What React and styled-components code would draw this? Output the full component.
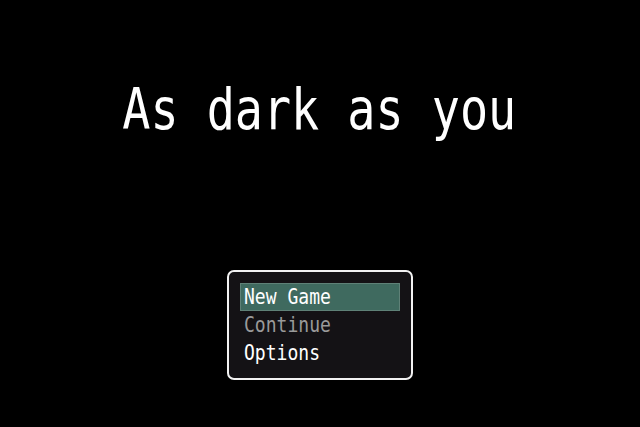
import React from "react";
import styled, { createGlobalStyle } from "styled-components";

const Global = createGlobalStyle`
  html, body { margin: 0; padding: 0; background: #000; }
  body { width: 640px; height: 427px; overflow: hidden; }
`;

const Screen = styled.div`
  width: 640px;
  height: 427px;
  background: #000;
  display: flex;
  flex-direction: column;
  align-items: center;
  font-family: "DejaVu Sans Mono", monospace;
`;

const Title = styled.h1`
  margin: 76px 0 0 0;
  font-size: 57px;
  line-height: 66px;
  font-weight: normal;
  white-space: nowrap;
  color: #fff;
  transform: translateX(-1px) scaleX(0.82);
  transform-origin: center center;
`;

const Window = styled.div`
  margin-top: 128px;
  width: 160px;
  padding: 11px;
  border: 2px solid #f2f2f2;
  border-radius: 7px;
  background: #141215;
  display: flex;
  flex-direction: column;
`;

const Item = styled.div`
  height: 28px;
  box-sizing: border-box;
  padding-left: 4px;
  font-size: 22px;
  line-height: 28px;
  white-space: nowrap;
  color: ${(p) => (p.$disabled ? "#9a9a9a" : "#ffffff")};
  background: ${(p) => (p.$selected ? "#3f6a5f" : "transparent")};
  box-shadow: ${(p) => (p.$selected ? "inset 0 0 0 1px #5f8177" : "none")};
`;

const Label = styled.span`
  display: inline-block;
  transform: scaleX(0.82);
  transform-origin: left center;
`;

export default function App() {
  return (
    <>
      <Global />
      <Screen>
        <Title>As dark as you</Title>
        <Window>
          <Item $selected>
            <Label>New Game</Label>
          </Item>
          <Item $disabled>
            <Label>Continue</Label>
          </Item>
          <Item>
            <Label>Options</Label>
          </Item>
        </Window>
      </Screen>
    </>
  );
}
